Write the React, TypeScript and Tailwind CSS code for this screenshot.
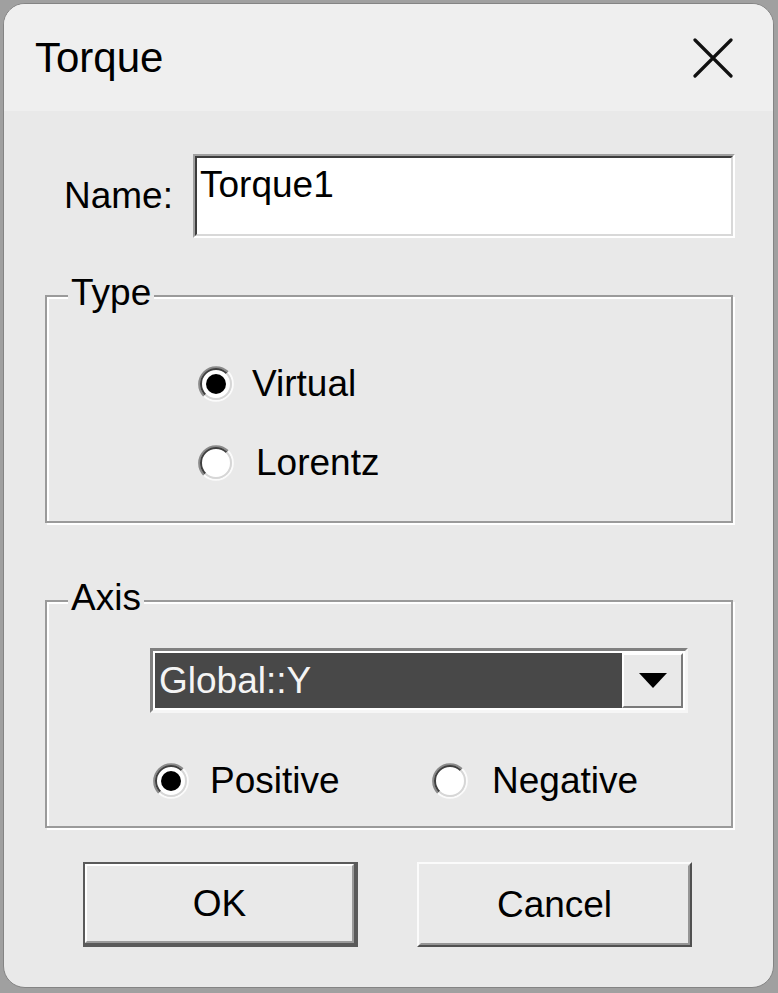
import React from 'react'

const font = { fontFamily: '"Liberation Sans", Arial, sans-serif' }

function Radio({ checked }: { checked?: boolean }) {
  return (
    <svg width="36" height="36" viewBox="0 0 36 36" className="shrink-0">
      <circle cx="18" cy="18" r="15" fill="#ffffff" />
      <path d="M30.02 5.98 A17 17 0 0 0 5.98 30.02" fill="none" stroke="#8a8a8a" strokeWidth="2" />
      <path d="M5.98 30.02 A17 17 0 0 0 30.02 5.98" fill="none" stroke="#fbfbfb" strokeWidth="2" />
      <path d="M28.61 7.39 A15 15 0 0 0 7.39 28.61" fill="none" stroke="#3f3f3f" strokeWidth="2" />
      <path d="M7.39 28.61 A15 15 0 0 0 28.61 7.39" fill="none" stroke="#d6d6d6" strokeWidth="2" />
      {checked && <circle cx="18" cy="18" r="10" fill="#000000" />}
    </svg>
  )
}

function GroupBox({ label, className, children }: { label: string; className?: string; children: React.ReactNode }) {
  return (
    <div className={`relative border-2 border-[#9a9a9a] shadow-[inset_2px_2px_0_#ffffff,2px_2px_0_#ffffff] ${className ?? ''}`}>
      <span className="absolute left-[21px] top-[-25px] bg-[#e9e9e9] px-[3px] text-[37px] leading-[42px] text-black">
        {label}
      </span>
      {children}
    </div>
  )
}

function Button({ label, isDefault }: { label: string; isDefault?: boolean }) {
  if (isDefault) {
    return (
      <div className="h-[85px] w-[275px] border-2 border-[#5a5a5a] border-b-[4px] border-r-[4px]">
        <div className="flex h-full w-full items-center justify-center border-2 border-t-white border-l-white border-b-[#9a9a9a] border-r-[#9a9a9a] bg-[#e9e9e9] text-[37px] text-black">
          {label}
        </div>
      </div>
    )
  }
  return (
    <div className="h-[85px] w-[275px] border-2 border-t-[#fbfbfb] border-l-[#fbfbfb] border-b-[#505050] border-r-[#505050]">
      <div className="flex h-full w-full items-center justify-center border-2 border-t-[#e9e9e9] border-l-[#e9e9e9] border-b-[#959595] border-r-[#959595] bg-[#e9e9e9] text-[37px] text-black">
        {label}
      </div>
    </div>
  )
}

export default function App() {
  return (
    <div className="h-[993px] w-[778px] bg-[#a0a0a0] pt-[3px] pl-[3px]" style={font}>
      <div className="flex h-[985px] w-[771px] flex-col overflow-hidden rounded-[22px] border border-[#848484] bg-[#e9e9e9]">
        {/* title bar */}
        <div className="flex h-[107px] shrink-0 items-center justify-between bg-[#efefef] pl-[31px] pr-[40px]">
          <span className="text-[42px] text-black">Torque</span>
          <svg width="40" height="40" viewBox="0 0 40 40">
            <path d="M2 2 L38 38 M38 2 L2 38" stroke="#111111" strokeWidth="3.2" strokeLinecap="round" />
          </svg>
        </div>

        <div className="flex flex-col pl-[41px] pr-[40px] pt-[43px]">
          {/* name */}
          <div className="flex h-[84px] items-center">
            <div className="w-[148px] shrink-0 pl-[19px] text-[37px] text-black">Name:</div>
            <div className="-mr-[2px] h-[84px] w-[542px] shrink-0 border-2 border-t-[#a0a0a0] border-l-[#a0a0a0] border-b-[#ffffff] border-r-[#ffffff]">
              <div className="h-full w-full border-2 border-t-[#3c3c3c] border-l-[#3c3c3c] border-b-[#d8d8d8] border-r-[#d8d8d8] bg-white pl-[3px] pt-[6px] text-[37px] leading-[42px] text-black">
                Torque1
              </div>
            </div>
          </div>

          {/* type */}
          <GroupBox label="Type" className="mt-[57px] h-[228px]">
            <div className="flex flex-col gap-[37px] pl-[151px] pt-[66px]">
              <div className="flex items-center gap-[18px]">
                <Radio checked />
                <span className="text-[37px] leading-[42px] text-black">Virtual</span>
              </div>
              <div className="flex items-center gap-[22px]">
                <Radio />
                <span className="text-[37px] leading-[42px] text-black">Lorentz</span>
              </div>
            </div>
          </GroupBox>

          {/* axis */}
          <GroupBox label="Axis" className="mt-[77px] h-[228px]">
            <div className="flex flex-col pl-[103px] pt-[46px]">
              <div className="flex h-[65px] w-[538px] border-[3px] border-t-[#808080] border-l-[#808080] border-b-[#f6f6f6] border-r-[#f6f6f6] bg-white p-[2px]">
                <div className="flex flex-1 items-center bg-[#484848] pl-[4px] text-[37px] leading-[42px] text-[#f4f4f4]">
                  Global::Y
                </div>
                <div className="flex w-[61px] items-center justify-center border-2 border-t-white border-l-white border-b-[#7a7a7a] border-r-[#7a7a7a] bg-[#e9e9e9]">
                  <svg width="28" height="15" viewBox="0 0 28 15">
                    <path d="M0 0 H28 L14 15 Z" fill="#000000" />
                  </svg>
                </div>
              </div>
              <div className="ml-[3px] mt-[47px] flex items-center">
                <div className="flex w-[279px] items-center gap-[21px]">
                  <Radio checked />
                  <span className="text-[37px] leading-[42px] text-black">Positive</span>
                </div>
                <div className="flex items-center gap-[24px]">
                  <Radio />
                  <span className="text-[37px] leading-[42px] text-black">Negative</span>
                </div>
              </div>
            </div>
          </GroupBox>

          {/* buttons */}
          <div className="ml-[38px] mt-[34px] flex gap-[59px]">
            <Button label="OK" isDefault />
            <Button label="Cancel" />
          </div>
        </div>
      </div>
    </div>
  )
}
